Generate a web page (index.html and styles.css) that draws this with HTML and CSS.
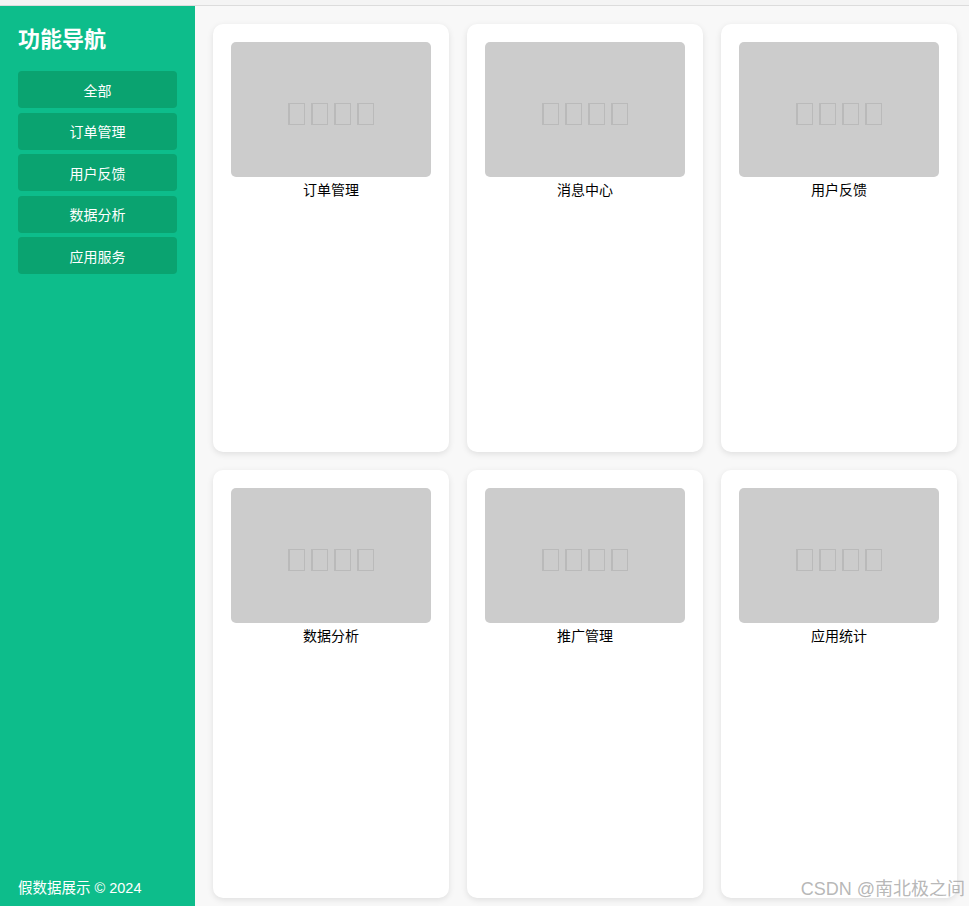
FILE: index.html
```html
<!DOCTYPE html>
<html lang="zh-CN">
<head>
    <meta charset="UTF-8">
    <meta name="viewport" content="width=device-width, initial-scale=1.0">
    <title>功能导航</title>
    <link rel="stylesheet" href="styles.css">
</head>
<body>
    <div class="topbar"></div>
    <div class="layout">
        <aside class="sidebar">
            <h2 class="sidebar-title">功能导航</h2>
            <nav class="menu">
                <button class="menu-btn">全部</button>
                <button class="menu-btn">订单管理</button>
                <button class="menu-btn">用户反馈</button>
                <button class="menu-btn">数据分析</button>
                <button class="menu-btn">应用服务</button>
            </nav>
            <div class="sidebar-footer">假数据展示 © 2024</div>
        </aside>

        <main class="main">
            <div class="grid">
                <div class="card">
                    <div class="thumb"><span></span><span></span><span></span><span></span></div>
                    <div class="card-title">订单管理</div>
                </div>
                <div class="card">
                    <div class="thumb"><span></span><span></span><span></span><span></span></div>
                    <div class="card-title">消息中心</div>
                </div>
                <div class="card">
                    <div class="thumb"><span></span><span></span><span></span><span></span></div>
                    <div class="card-title">用户反馈</div>
                </div>
                <div class="card">
                    <div class="thumb"><span></span><span></span><span></span><span></span></div>
                    <div class="card-title">数据分析</div>
                </div>
                <div class="card">
                    <div class="thumb"><span></span><span></span><span></span><span></span></div>
                    <div class="card-title">推广管理</div>
                </div>
                <div class="card">
                    <div class="thumb"><span></span><span></span><span></span><span></span></div>
                    <div class="card-title">应用统计</div>
                </div>
            </div>
        </main>
    </div>
    <div class="watermark">CSDN @南北极之间</div>
</body>
</html>
```

FILE: styles.css
```css
* {
    box-sizing: border-box;
}
body {
    margin: 0;
    font-family: "Liberation Sans", "Noto Sans CJK SC", sans-serif;
    font-size: 14px;
    background: #f8f8f8;
    overflow: hidden;
}
.topbar {
    height: 6px;
    background: #f4f4f4;
    border-bottom: 1px solid #dcdcdc;
}
.layout {
    display: flex;
    height: 900px;
}
.sidebar {
    width: 195px;
    flex-shrink: 0;
    background: #0dbd8b;
    color: #fff;
    padding: 18px 18px 8px;
    display: flex;
    flex-direction: column;
}
.sidebar-title {
    margin: 0 0 15px;
    font-size: 22px;
    line-height: 32px;
    font-weight: bold;
}
.menu {
    display: flex;
    flex-direction: column;
    gap: 4.5px;
}
.menu-btn {
    height: 37px;
    border: none;
    border-radius: 4px;
    background: #0aa370;
    color: #fff;
    font-family: inherit;
    font-size: 14px;
    cursor: pointer;
}
.sidebar-footer {
    margin-top: auto;
    font-size: 14.5px;
    line-height: 20px;
}
.main {
    flex: 1;
    padding: 18px;
    overflow: hidden;
}
.grid {
    display: grid;
    grid-template-columns: repeat(3, 236px);
    grid-auto-rows: 428px;
    gap: 18px;
}
.card {
    background: #fff;
    border-radius: 10px;
    box-shadow: 0 2px 6px rgba(0, 0, 0, 0.1);
    padding: 18px;
}
.thumb {
    height: 135px;
    background: #cccccc;
    border-radius: 5px;
    display: flex;
    align-items: center;
    justify-content: center;
    gap: 6px;
    padding-top: 8px;
}
.thumb span {
    width: 17px;
    height: 22px;
    border: 1.5px solid #bababa;
    border-left-width: 2.5px;
}
.card-title {
    margin-top: 3px;
    text-align: center;
    line-height: 20px;
    color: #000;
}
.watermark {
    position: absolute;
    right: 4px;
    bottom: 6px;
    font-size: 18px;
    color: rgba(165, 165, 165, 0.8);
}
```
